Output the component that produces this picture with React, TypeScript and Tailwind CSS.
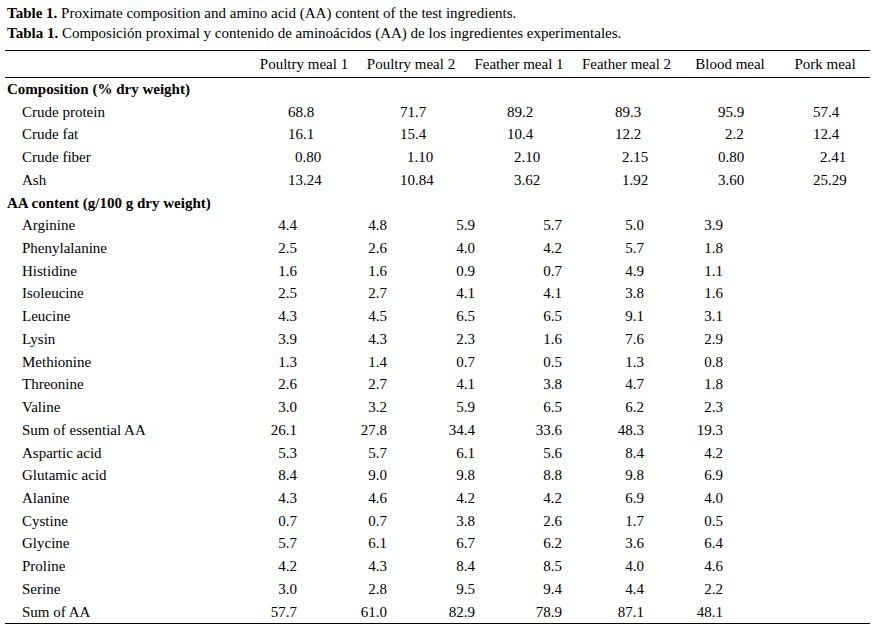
const cols = ["Poultry meal 1", "Poultry meal 2", "Feather meal 1", "Feather meal 2", "Blood meal", "Pork meal"];

// a leading space marks a value set in by one figure
const composition: [string, string[]][] = [
  ["Crude protein", ["68.8", "71.7", "89.2", "89.3", "95.9", "57.4"]],
  ["Crude fat", ["16.1", "15.4", "10.4", "12.2", " 2.2", "12.4"]],
  ["Crude fiber", [" 0.80", " 1.10", " 2.10", " 2.15", "0.80", " 2.41"]],
  ["Ash", ["13.24", "10.84", " 3.62", " 1.92", "3.60", "25.29"]],
];

const aminoAcids: [string, string[]][] = [
  ["Arginine", ["4.4", "4.8", "5.9", "5.7", "5.0", "3.9"]],
  ["Phenylalanine", ["2.5", "2.6", "4.0", "4.2", "5.7", "1.8"]],
  ["Histidine", ["1.6", "1.6", "0.9", "0.7", "4.9", "1.1"]],
  ["Isoleucine", ["2.5", "2.7", "4.1", "4.1", "3.8", "1.6"]],
  ["Leucine", ["4.3", "4.5", "6.5", "6.5", "9.1", "3.1"]],
  ["Lysin", ["3.9", "4.3", "2.3", "1.6", "7.6", "2.9"]],
  ["Methionine", ["1.3", "1.4", "0.7", "0.5", "1.3", "0.8"]],
  ["Threonine", ["2.6", "2.7", "4.1", "3.8", "4.7", "1.8"]],
  ["Valine", ["3.0", "3.2", "5.9", "6.5", "6.2", "2.3"]],
  ["Sum of essential AA", ["26.1", "27.8", "34.4", "33.6", "48.3", "19.3"]],
  ["Aspartic acid", ["5.3", "5.7", "6.1", "5.6", "8.4", "4.2"]],
  ["Glutamic acid", ["8.4", "9.0", "9.8", "8.8", "9.8", "6.9"]],
  ["Alanine", ["4.3", "4.6", "4.2", "4.2", "6.9", "4.0"]],
  ["Cystine", ["0.7", "0.7", "3.8", "2.6", "1.7", "0.5"]],
  ["Glycine", ["5.7", "6.1", "6.7", "6.2", "3.6", "6.4"]],
  ["Proline", ["4.2", "4.3", "8.4", "8.5", "4.0", "4.6"]],
  ["Serine", ["3.0", "2.8", "9.5", "9.4", "4.4", "2.2"]],
  ["Sum of AA", ["57.7", "61.0", "82.9", "78.9", "87.1", "48.1"]],
];

const headGrid = "grid grid-cols-[246px_106px_108px_108px_107px_100px_90px]";
// composition figures are set flush left
const compGrid = "grid grid-cols-[283px_112px_107px_108px_103px_95px_57px]";
// amino acid figures are set flush right
const aaGrid = "grid grid-cols-[246px_46px_90px_88px_87px_82px_79px_147px]";

function Section({ title }: { title: string }) {
  return <div className="h-[22.73px] whitespace-nowrap pl-[2px] font-bold">{title}</div>;
}

export default function App() {
  return (
    <div className="min-h-[636px] w-[875px] bg-white pl-[5px] pt-[3px] font-['Liberation_Serif','Times_New_Roman',serif] text-[15px] leading-[20px] text-black">
      <p className="whitespace-nowrap pl-[2px]">
        <b>Table 1.</b> Proximate composition and amino acid (AA) content of the test ingredients.
      </p>
      <p className="whitespace-nowrap pl-[2px]">
        <b>Tabla 1.</b> Composición proximal y contenido de aminoácidos (AA) de los ingredientes experimentales.
      </p>

      <div className="mt-[7px] w-[865px] border-y border-black leading-[22.73px]">
        <div className={`${headGrid} h-[27px] items-center border-b border-black`}>
          <div />
          {cols.map((c) => (
            <div key={c} className="whitespace-nowrap text-center">
              {c}
            </div>
          ))}
        </div>

        <Section title="Composition (% dry weight)" />
        {composition.map(([label, vals]) => (
          <div key={label} className={`${compGrid} h-[22.73px]`}>
            <div className="pl-[17px]">{label}</div>
            {vals.map((v, i) => (
              <div key={i} className={v.startsWith(" ") ? "pl-[7px]" : ""}>
                {v.trim()}
              </div>
            ))}
            <div />
          </div>
        ))}

        <Section title="AA content (g/100 g dry weight)" />
        {aminoAcids.map(([label, vals]) => (
          <div key={label} className={`${aaGrid} h-[22.73px]`}>
            <div className="pl-[17px]">{label}</div>
            {vals.map((v, i) => (
              <div key={i} className="text-right">
                {v}
              </div>
            ))}
            <div />
          </div>
        ))}
      </div>
    </div>
  );
}
